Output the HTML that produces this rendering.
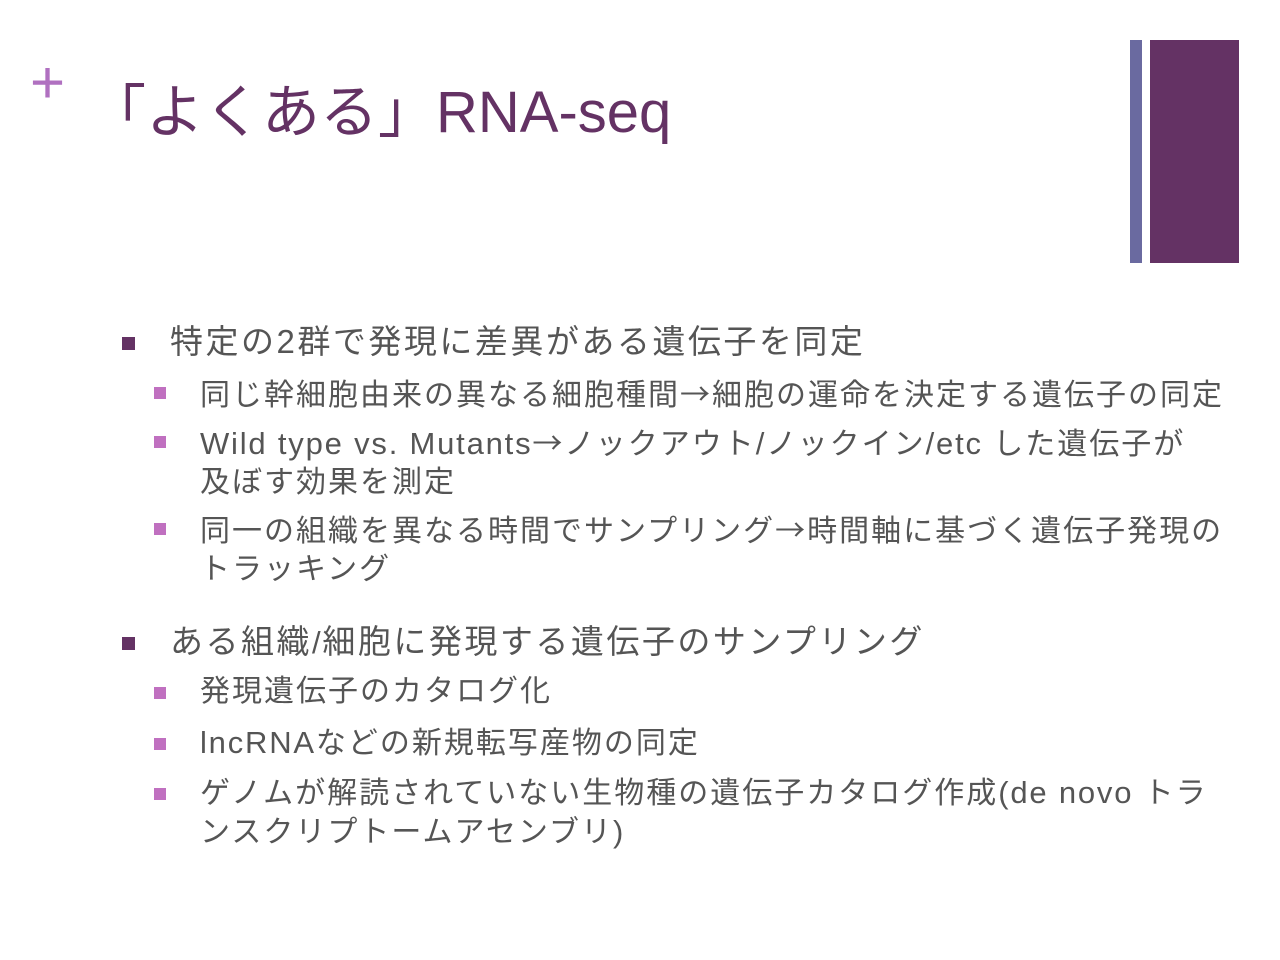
<!DOCTYPE html>
<html><head><meta charset="utf-8"><style>
body{margin:0;width:1280px;height:960px;background:#fff;position:relative;overflow:hidden;font-family:"Liberation Sans","Noto Sans CJK JP",sans-serif;color:#555}
.a{position:absolute;white-space:nowrap}
.t{left:88px;top:78px;font-size:58px;color:#643264;line-height:70px}
.l1{left:170px;font-size:33px;letter-spacing:2.5px;line-height:38px}
.l2{left:200px;font-size:30px;letter-spacing:2px;line-height:38px}
.e{letter-spacing:1.8px;font-size:31px}
.ar{font-family:"Noto Sans CJK JP",sans-serif}
.b1{position:absolute;left:122px;width:13px;height:13px;background:#643264}
.b2{position:absolute;left:154px;width:12px;height:12px;background:#c070c0}
</style></head><body>
<div class="a" style="left:30px;top:50px;font-size:60px;color:#b070c0;line-height:66px">+</div>
<div class="a t">「よくある」RNA-seq</div>
<div style="position:absolute;left:1130px;top:40px;width:12px;height:223px;background:#6a6aa0"></div>
<div style="position:absolute;left:1150px;top:40px;width:89px;height:223px;background:#643264"></div>

<div class="b1" style="top:337px"></div><div class="a l1" style="top:323px">特定の2群で発現に差異がある遺伝子を同定</div>
<div class="b2" style="top:387px"></div><div class="a l2" style="top:373px">同じ幹細胞由来の異なる細胞種間<span class="ar">→</span>細胞の運命を決定する遺伝子の同定</div>
<div class="b2" style="top:436px"></div><div class="a l2" style="top:422px"><span class="e">Wild type vs. Mutants</span><span class="ar">→</span>ノックアウト<span class="e">/</span>ノックイン<span class="e">/etc </span>した遺伝子が<br>及ぼす効果を測定</div>
<div class="b2" style="top:523px"></div><div class="a l2" style="top:509px">同一の組織を異なる時間でサンプリング<span class="ar">→</span>時間軸に基づく遺伝子発現の<br>トラッキング</div>

<div class="b1" style="top:637px"></div><div class="a l1" style="top:623px">ある組織<span class="e">/</span>細胞に発現する遺伝子のサンプリング</div>
<div class="b2" style="top:687px"></div><div class="a l2" style="top:673px">発現遺伝子のカタログ化</div>
<div class="b2" style="top:738px"></div><div class="a l2" style="top:724px"><span class="e">lncRNA</span>などの新規転写産物の同定</div>
<div class="b2" style="top:788px"></div><div class="a l2" style="top:774px">ゲノムが解読されていない生物種の遺伝子カタログ作成<span class="e">(de novo </span>トラ<br>ンスクリプトームアセンブリ<span class="e">)</span></div>
</body></html>
